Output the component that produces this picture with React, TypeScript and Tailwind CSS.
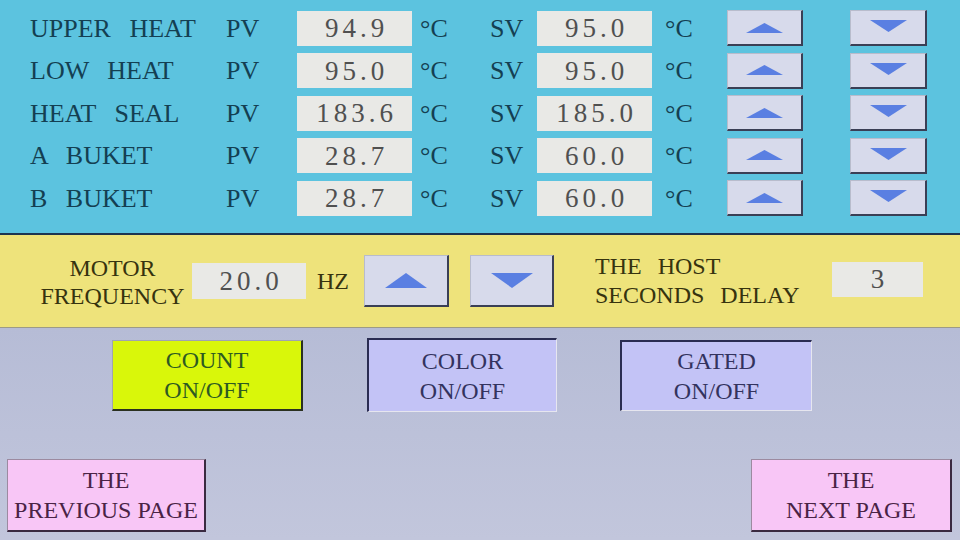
import React from "react";

const serif = { fontFamily: '"Liberation Serif", "DejaVu Serif", serif' };

const rows = [
  { name: "UPPER HEAT", pv: "94.9", sv: "95.0" },
  { name: "LOW HEAT", pv: "95.0", sv: "95.0" },
  { name: "HEAT SEAL", pv: "183.6", sv: "185.0" },
  { name: "A BUKET", pv: "28.7", sv: "60.0" },
  { name: "B BUKET", pv: "28.7", sv: "60.0" },
];

function Tri({ dir, w, h }: { dir: "up" | "down"; w: number; h: number }) {
  return (
    <svg width={w} height={h} viewBox={`0 0 ${w} ${h}`}>
      {dir === "up" ? (
        <polygon points={`0,${h} ${w / 2},0 ${w},${h}`} fill="#5a7fe2" />
      ) : (
        <polygon points={`0,0 ${w},0 ${w / 2},${h}`} fill="#5a7fe2" />
      )}
    </svg>
  );
}

function ArrowBtn({ dir, className, tw, th }: { dir: "up" | "down"; className: string; tw: number; th: number }) {
  return (
    <div
      className={`flex items-center justify-center bg-[#d7daeb] border-t border-l border-t-[#b8bccc] border-l-[#b8bccc] border-b-2 border-r-2 border-b-[#3a3f55] border-r-[#3a3f55] ${className}`}
    >
      <Tri dir={dir} w={tw} h={th} />
    </div>
  );
}

function ValueBox({ value, className }: { value: string; className: string }) {
  return (
    <div className={`flex items-center justify-center bg-[#e9e9e6] text-[#505050] text-[27px] tracking-[4px] ${className}`}>
      <span className="pl-[4px]">{value}</span>
    </div>
  );
}

function BigBtn({ lines, className }: { lines: string[]; className: string }) {
  return (
    <div className={`flex flex-col items-center justify-center text-[24px] leading-[30px] ${className}`}>
      {lines.map((l) => (
        <span key={l}>{l}</span>
      ))}
    </div>
  );
}

export default function App() {
  return (
    <div style={serif} className="w-[960px] h-[540px] overflow-hidden flex flex-col">
      <section className="h-[235px] shrink-0 bg-[#5cc3df] border-b-2 border-[#1d3450] pt-[7px] text-[#143f52]">
        {rows.map((r) => (
          <div key={r.name} className="h-[42.5px] flex items-center">
            <span className="w-[226px] pl-[30px] text-[26px] [word-spacing:12px]">{r.name}</span>
            <span className="w-[71px] text-[26px]">PV</span>
            <ValueBox value={r.pv} className="w-[115px] h-[35px]" />
            <span className="w-[78px] pl-[8px] text-[26px]">°C</span>
            <span className="w-[47px] text-[26px]">SV</span>
            <ValueBox value={r.sv} className="w-[115px] h-[35px]" />
            <span className="w-[75px] pl-[13px] text-[26px]">°C</span>
            <ArrowBtn dir="up" tw={37} th={10} className="w-[76px] h-[36px]" />
            <div className="w-[47px]" />
            <ArrowBtn dir="down" tw={37} th={12} className="w-[77px] h-[36px] pb-[3px]" />
          </div>
        ))}
      </section>

      <section className="h-[93px] shrink-0 bg-[#eee37b] border-b border-[#9c9a86] flex items-center text-[#36330f] text-[24px]">
        <div className="w-[192px] pl-[37px] pr-[4px] flex flex-col items-center leading-[28px] pt-[2px]">
          <span>MOTOR</span>
          <span>FREQUENCY</span>
        </div>
        <ValueBox value="20.0" className="w-[114px] h-[36px]" />
        <span className="w-[58px] pl-[11px]">HZ</span>
        <ArrowBtn dir="up" tw={42} th={15} className="w-[85px] h-[52px]" />
        <div className="w-[21px]" />
        <ArrowBtn dir="down" tw={42} th={15} className="w-[84px] h-[52px]" />
        <div className="w-[278px] pl-[41px] flex flex-col leading-[29px] whitespace-nowrap [word-spacing:10px]">
          <span>THE HOST</span>
          <span>SECONDS DELAY</span>
        </div>
        <ValueBox value="3" className="w-[91px] h-[35px] -mt-[4px]" />
      </section>

      <section className="flex-1 bg-gradient-to-b from-[#b6bcd6] to-[#c2c6dc] flex flex-col">
        <div className="flex items-center pt-[10px] pl-[112px]">
          <BigBtn
            lines={["COUNT", "ON/OFF"]}
            className="w-[191px] h-[71px] bg-[#d9f70a] text-[#2d5a22] border-t border-l border-[#a0a4b0] border-b-2 border-r-2 border-b-[#2a3020] border-r-[#2a3020]"
          />
          <div className="w-[64px]" />
          <BigBtn
            lines={["COLOR", "ON/OFF"]}
            className="w-[190px] h-[74px] bg-[#c3c3f6] text-[#33335e] border-t-2 border-l-2 border-t-[#2a2c52] border-l-[#2a2c52] border-b border-r border-b-[#e6e6ef] border-r-[#e6e6ef]"
          />
          <div className="w-[63px]" />
          <BigBtn
            lines={["GATED", "ON/OFF"]}
            className="w-[192px] h-[71px] bg-[#c3c3f6] text-[#33335e] border-t-2 border-l-2 border-t-[#2a2c52] border-l-[#2a2c52] border-b border-r border-b-[#e6e6ef] border-r-[#e6e6ef]"
          />
        </div>
        <div className="flex justify-between items-center px-[7px] mt-[47px] pr-[8px]">
          <BigBtn
            lines={["THE", "PREVIOUS PAGE"]}
            className="w-[199px] h-[73px] bg-[#f8c6f6] text-[#4a2345] border-t border-l border-[#9c8aa0] border-b-2 border-r-2 border-b-[#3a2a40] border-r-[#3a2a40]"
          />
          <BigBtn
            lines={["THE", "NEXT PAGE"]}
            className="w-[201px] h-[73px] bg-[#f8c6f6] text-[#4a2345] border-t border-l border-[#9c8aa0] border-b-2 border-r-2 border-b-[#3a2a40] border-r-[#3a2a40]"
          />
        </div>
      </section>
    </div>
  );
}
